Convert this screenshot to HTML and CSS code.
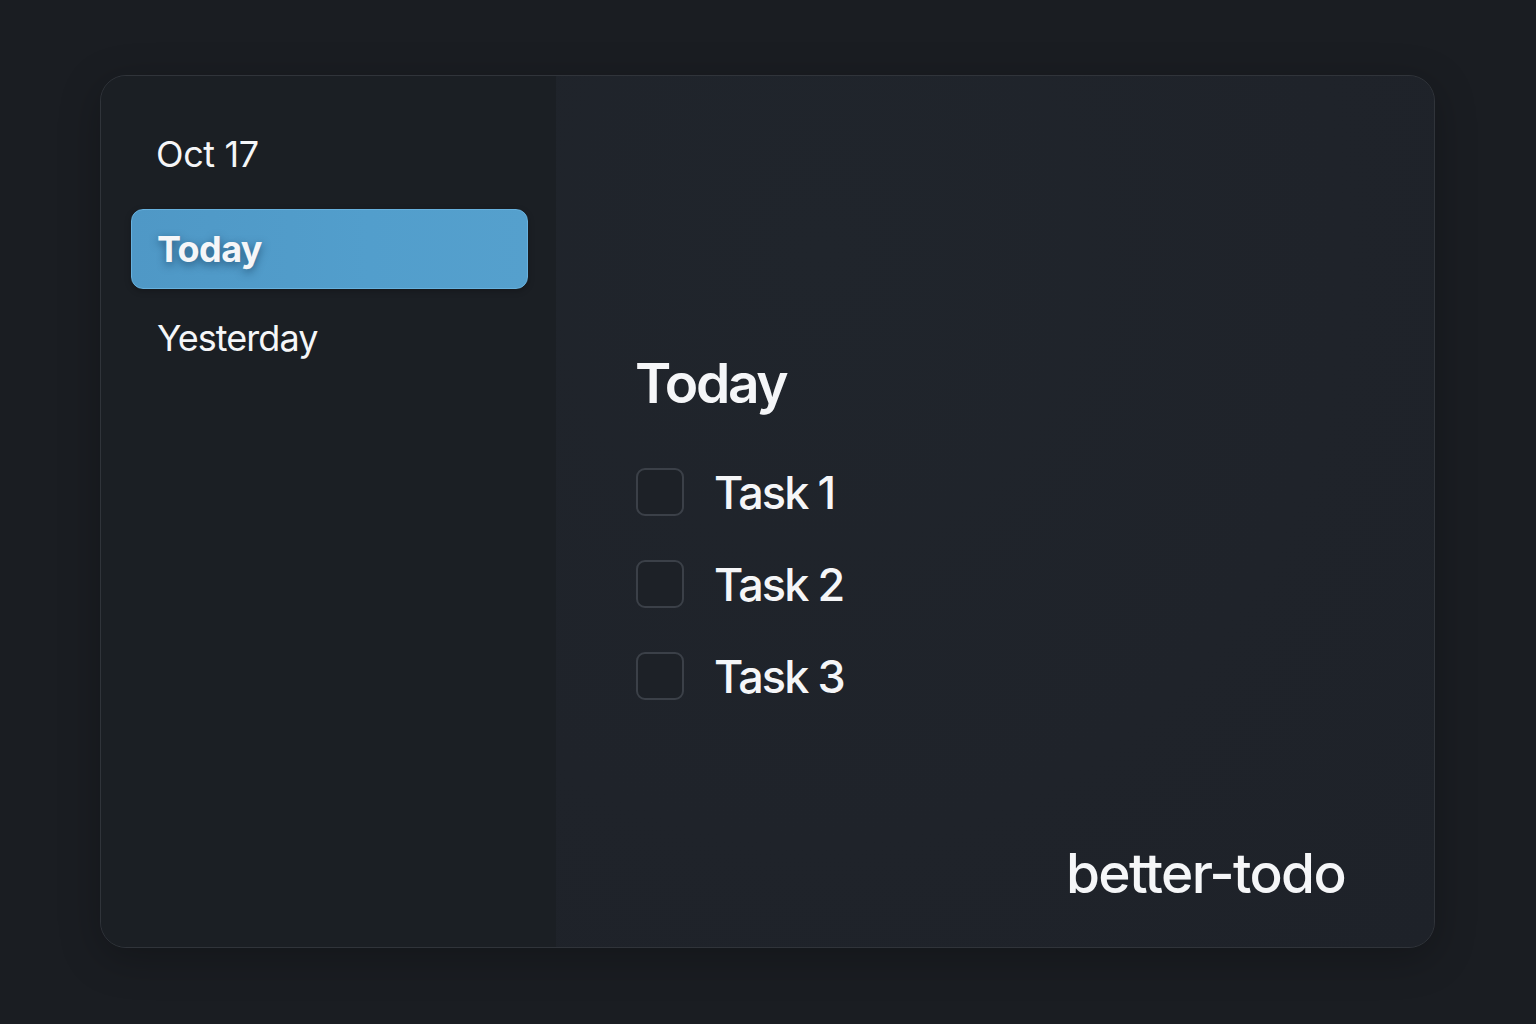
FILE: index.html
```html
<!DOCTYPE html>
<html lang="en">
<head>
<meta charset="utf-8">
<title>better-todo</title>
<link rel="stylesheet" href="styles.css">
</head>
<body>
<div class="window">
  <aside class="sidebar">
    <div class="date-label">Oct 17</div>
    <div class="nav-item selected">Today</div>
    <div class="nav-item">Yesterday</div>
  </aside>
  <main class="main">
    <h1 class="heading">Today</h1>
    <ul class="tasks">
      <li class="task"><span class="check"></span><span class="task-label">Task 1</span></li>
      <li class="task"><span class="check"></span><span class="task-label">Task 2</span></li>
      <li class="task"><span class="check"></span><span class="task-label">Task 3</span></li>
    </ul>
    <div class="brand">better-todo</div>
  </main>
</div>
</body>
</html>
```

FILE: styles.css
```css
* { box-sizing: border-box; }
html, body { margin: 0; padding: 0; }
body {
  width: 1536px;
  height: 1024px;
  background: #1a1d22;
  font-family: Inter, "Noto Sans", "Liberation Sans", sans-serif;
  color: #f5f6f8;
  padding: 75px 101px 76px 100px;
}
.window {
  display: flex;
  height: 873px;
  border: 1px solid #30343a;
  border-radius: 26px;
  overflow: hidden;
  background: #1f232a;
  box-shadow: 0 10px 40px rgba(0,0,0,0.25);
}
.sidebar {
  width: 455px;
  flex: none;
  background: #1b1f24;
  padding: 60px 28px 0 30px;
  display: flex;
  flex-direction: column;
}
.date-label {
  font-size: 36px;
  line-height: 1;
  font-weight: 400;
  padding-left: 25px;
  letter-spacing: -0.4px;
  margin-bottom: 37px;
}
.nav-item {
  height: 80px;
  display: flex;
  align-items: center;
  padding-left: 25px;
  font-size: 36px;
  line-height: 1;
  font-weight: 400;
  letter-spacing: -0.95px;
  border-radius: 12px;
  border: 1px solid transparent;
}
.nav-item + .nav-item { margin-top: 9px; }
.nav-item.selected {
  background: linear-gradient(90deg, #4f98c6 0%, #529ecc 60%, #55a0cd 100%);
  border-color: #67b1de;
  font-weight: 700;
  letter-spacing: -0.6px;
  text-shadow: 0 3px 8px rgba(10, 40, 70, 0.55);
  box-shadow: 0 2px 6px rgba(0,0,0,0.25);
}
.main {
  flex: 1;
  display: flex;
  flex-direction: column;
  padding: 280px 89px 46px 78px;
  background: radial-gradient(ellipse at 30% 20%, #20252c 0%, #1f232a 60%, #1e2229 100%);
}
.heading {
  margin: 0;
  font-size: 55px;
  line-height: 1;
  font-weight: 600;
  letter-spacing: -2.3px;
  padding-left: 1px;
}
.tasks {
  list-style: none;
  margin: 57px 0 0;
  padding: 0 0 0 2px;
  display: flex;
  flex-direction: column;
  gap: 44px;
}
.task {
  display: flex;
  align-items: center;
  height: 48px;
  gap: 30px;
}
.check {
  width: 48px;
  height: 48px;
  flex: none;
  border: 2px solid #3b4048;
  border-radius: 9px;
  background: #1d2127;
}
.task-label {
  font-size: 45px;
  line-height: 1;
  font-weight: 500;
  letter-spacing: -1.9px;
}
.brand {
  margin-top: auto;
  align-self: flex-end;
  font-size: 55px;
  line-height: 1;
  font-weight: 500;
  letter-spacing: -1.65px;
}
```
